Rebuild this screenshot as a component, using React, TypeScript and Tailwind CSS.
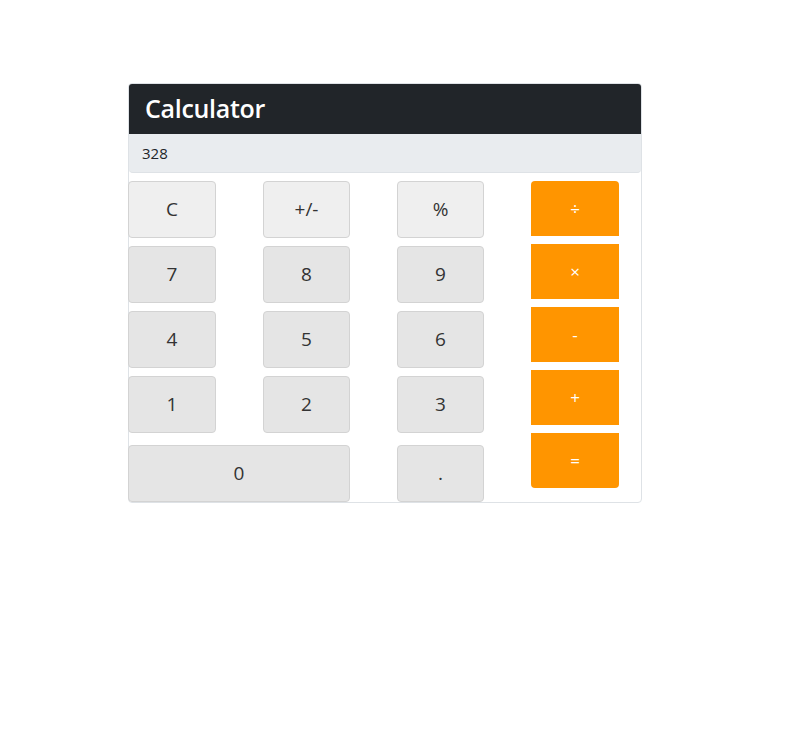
const numberRows = [
  ["C", "+/-", "%"],
  ["7", "8", "9"],
  ["4", "5", "6"],
  ["1", "2", "3"],
];

const operators = ["÷", "×", "-", "+", "="];

export default function App() {
  return (
    <div className="min-h-screen bg-white pl-[128px] pt-[83px] font-['Open_Sans',sans-serif]">
      <div className="w-[514px] border border-[#dee2e6] rounded-[4px]">
        <div className="h-[50px] bg-[#212529] rounded-t-[3px] flex items-center px-[16px]">
          <h1 className="text-white text-[25px] font-semibold tracking-[-0.3px]">Calculator</h1>
        </div>
        <div className="h-[39px] bg-[#e9ecef] border-b border-[#dee2e6] rounded-b-[4px] flex items-center px-[13px] text-[15px] text-[#212529]">
          328
        </div>
        <div className="flex pt-[8px] -ml-px">
          <div className="flex flex-col">
            <div className="grid grid-cols-[88px_87px_87px] gap-x-[47px] gap-y-[8px]">
              {numberRows.map((row, i) =>
                row.map((label) => (
                  <button
                    key={label}
                    className={`h-[57px] rounded-[4px] border border-[#d3d3d3] text-[19px] text-[#333] ${
                      i === 0 ? "bg-[#efefef]" : "bg-[#e5e5e5]"
                    }`}
                  >
                    {label}
                  </button>
                ))
              )}
            </div>
            <div className="grid grid-cols-[222px_87px] gap-x-[47px] mt-[12px]">
              <button className="h-[57px] rounded-[4px] border border-[#d3d3d3] bg-[#e5e5e5] text-[19px] text-[#333]">0</button>
              <button className="h-[57px] rounded-[4px] border border-[#d3d3d3] bg-[#e5e5e5] text-[19px] text-[#333]">.</button>
            </div>
          </div>
          <div className="ml-[47px] flex flex-col gap-[8px]">
            {operators.map((op, i) => (
              <button
                key={op}
                className={`w-[88px] h-[55px] bg-[#ff9500] text-white text-[17px] ${
                  i === 0 ? "rounded-t-[4px]" : ""
                } ${i === operators.length - 1 ? "rounded-b-[4px]" : ""}`}
              >
                {op}
              </button>
            ))}
          </div>
        </div>
      </div>
    </div>
  );
}
